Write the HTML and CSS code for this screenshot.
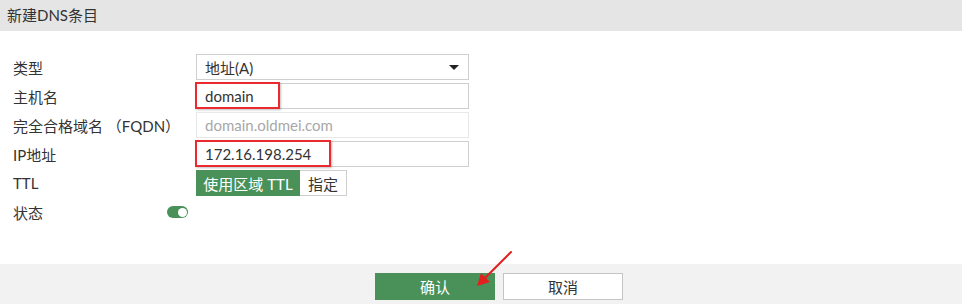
FILE: index.html
```html
<!DOCTYPE html>
<html lang="zh-CN">
<head>
  <meta charset="UTF-8" />
  <title>新建DNS条目</title>
  <link rel="stylesheet" href="styles.css">
</head>
<body>

  <div class="dialog">
    <div class="header">新建DNS条目</div>

    <div class="form">
      <div class="label">类型</div>
      <div class="field select">
        <span>地址(A)</span>
        <span class="caret"></span>
      </div>

      <div class="label">主机名</div>
      <div class="field">
        <span>domain</span>
        <span class="mark mark-host"></span>
      </div>

      <div class="label">完全合格域名 （FQDN）</div>
      <div class="field disabled">
        <span>domain.oldmei.com</span>
      </div>

      <div class="label">IP地址</div>
      <div class="field">
        <span>172.16.198.254</span>
        <span class="mark mark-ip"></span>
      </div>

      <div class="label">TTL</div>
      <div class="toggle-group">
        <button class="seg active">使用区域 TTL</button>
        <button class="seg">指定</button>
      </div>

      <div class="label">状态</div>
      <div class="switch-cell">
        <span class="switch"><span class="knob"></span></span>
      </div>
    </div>

    <div class="footer">
      <button class="btn primary">确认</button>
      <button class="btn">取消</button>
    </div>

    <svg class="arrow" width="50" height="50" viewBox="0 0 50 50">
      <line x1="42" y1="3" x2="14" y2="31" stroke="#e3201f" stroke-width="2" stroke-linecap="round"/>
      <polygon points="8,37 12,24 21,33" fill="#e3201f"/>
    </svg>
  </div>

</body>
</html>
```

FILE: styles.css
```css
body {
  margin: 0;
  font-family: Lato, "Noto Sans CJK SC", sans-serif;
  font-size: 15px;
  color: #333;
  background: #fff;
}

.dialog {
  position: relative;
  width: 962px;
  height: 304px;
  display: flex;
  flex-direction: column;
}

.header {
  height: 31px;
  line-height: 31px;
  padding-left: 7px;
  background: #e5e5e5;
  color: #333;
}

.form {
  flex: 1;
  display: grid;
  grid-template-columns: 183px 273px;
  grid-auto-rows: 26px;
  row-gap: 3px;
  align-content: start;
  padding: 23px 0 0 13px;
}

.label {
  display: flex;
  align-items: center;
  white-space: pre;
}

.field {
  position: relative;
  display: flex;
  align-items: center;
  justify-content: space-between;
  box-sizing: border-box;
  border: 1px solid #cfcfcf;
  padding: 0 8px;
  color: #333;
}

.field.disabled {
  border-color: #e8e8e8;
  color: #a8a8a8;
}

.caret {
  width: 0;
  height: 0;
  border-left: 5px solid transparent;
  border-right: 5px solid transparent;
  border-top: 5px solid #222;
  margin-right: 1px;
}

.mark {
  position: absolute;
  top: -2px;
  left: -2px;
  height: 27px;
  box-sizing: border-box;
  border: 2px solid #ea2a2e;
  box-shadow: 1px 1px 2px rgba(0, 0, 0, 0.25);
}

.mark-host {
  width: 85px;
}

.mark-ip {
  width: 136px;
}

.toggle-group {
  display: flex;
}

.seg {
  font: inherit;
  height: 26px;
  padding: 0 8px;
  border: 1px solid #cfcfcf;
  border-left: none;
  background: #fff;
  color: #333;
}

.seg.active {
  border: none;
  background: #4a9159;
  color: #fff;
  width: 104px;
  padding: 0;
}

.switch-cell {
  display: flex;
  align-items: center;
  margin-left: -29px;
}

.switch {
  display: flex;
  align-items: center;
  justify-content: flex-end;
  width: 19px;
  height: 12px;
  border-radius: 6px;
  background: #4a9159;
  padding: 0 1px;
}

.knob {
  width: 9px;
  height: 9px;
  border-radius: 50%;
  background: #fff;
}

.footer {
  height: 40px;
  background: #f2f2f2;
  display: flex;
  justify-content: center;
  align-items: flex-start;
  gap: 8px;
  padding: 9px 0 0 36px;
  box-sizing: border-box;
}

.btn {
  font: inherit;
  width: 120px;
  height: 27px;
  border: 1px solid #c4c4c4;
  background: #fff;
  color: #333;
}

.btn.primary {
  border: none;
  background: #4a9159;
  color: #fff;
}

.arrow {
  position: absolute;
  left: 469px;
  top: 249px;
}
```
